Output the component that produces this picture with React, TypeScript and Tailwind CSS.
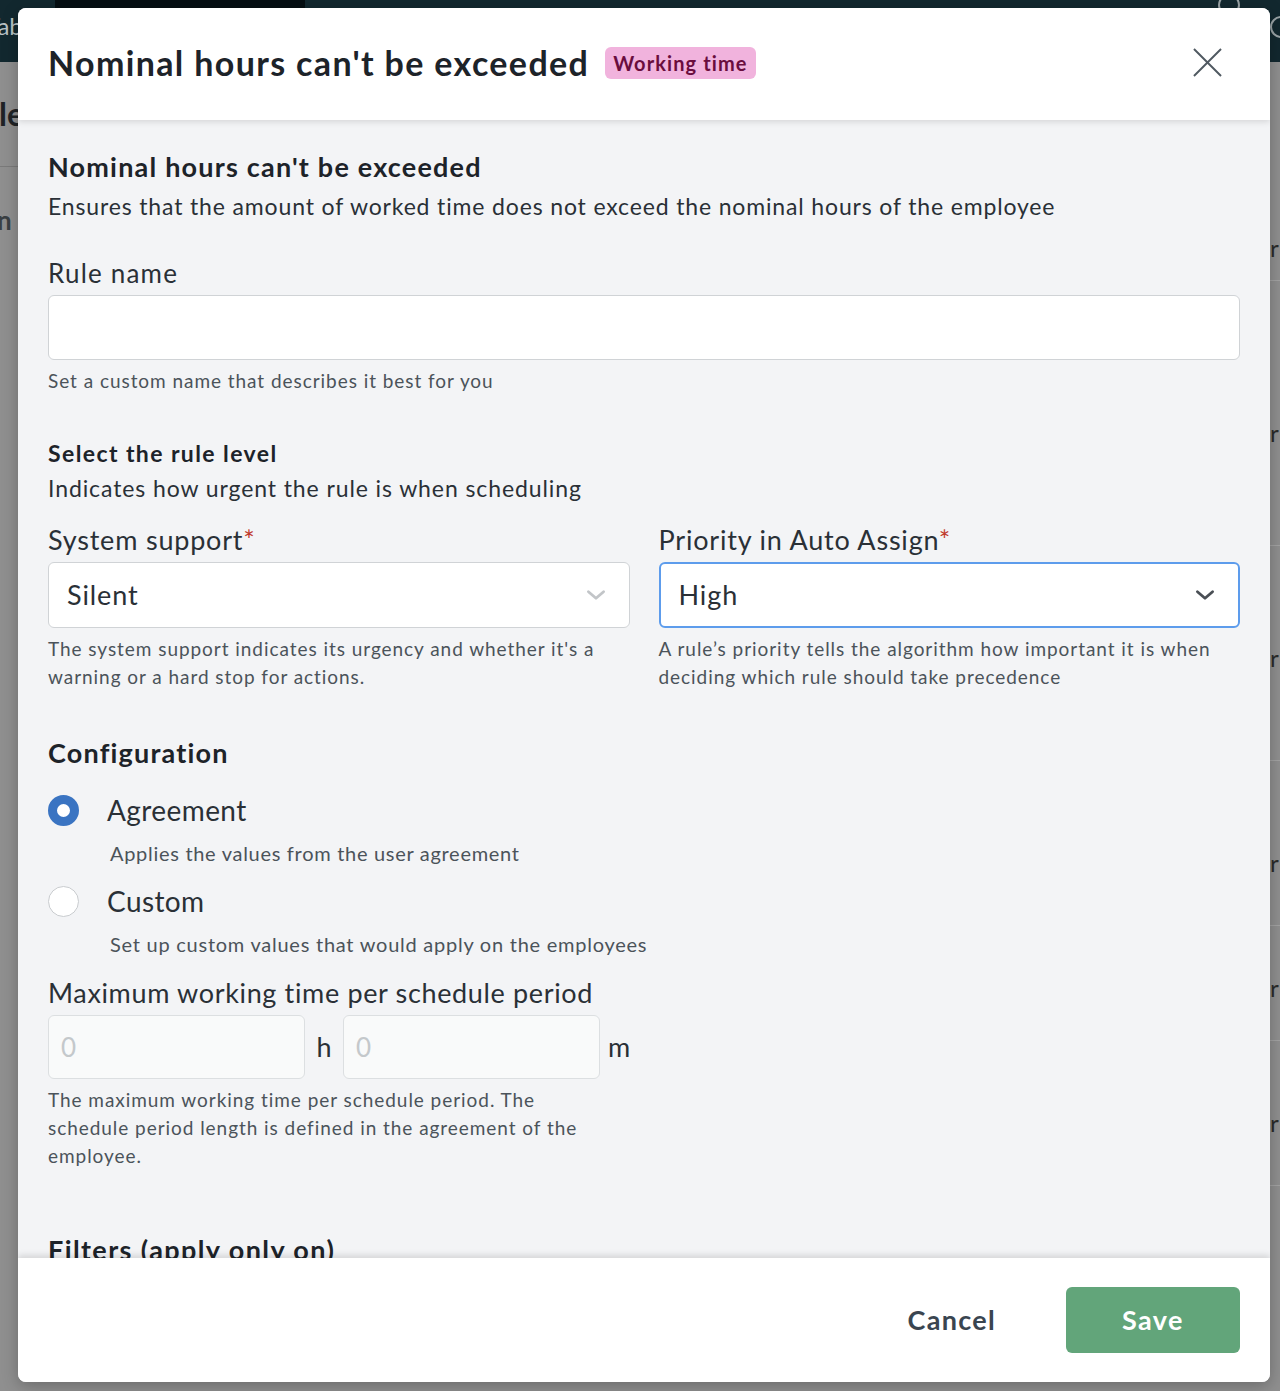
import React, { useState } from 'react';

const font = { fontFamily: 'Lato, "Noto Sans", sans-serif' };

const Chevron = ({ className }: { className?: string }) => (
    <svg viewBox="0 0 24 24" className={className} fill="none" stroke="currentColor" strokeWidth={2.6} strokeLinecap="round" strokeLinejoin="round">
        <path d="M5 9l7 6 7-6" />
    </svg>
);

const Radio = ({ checked }: { checked: boolean }) =>
    checked ? (
        <span className="block w-[31px] h-[31px] rounded-full border-[9px] border-[#3a74c2] bg-white" />
    ) : (
        <span className="block w-[31px] h-[31px] rounded-full border border-[#c9cccf] bg-white" />
    );

const Select = ({ value, focused }: { value: string; focused?: boolean }) => (
    <div
        className={
            focused
                ? 'flex items-center justify-between h-[66px] pl-[18px] pr-[20px] bg-white rounded-md border-2 border-[#5d9cec]'
                : 'flex items-center justify-between h-[66px] pl-[18px] pr-[20px] bg-white rounded-md border border-[#d0d3d6]'
        }
    >
        <span className="text-[27px] tracking-[0.9px] text-[#2a3036]">{value}</span>
        <Chevron className={focused ? 'w-[26px] h-[26px] text-[#4a4f55]' : 'w-[26px] h-[26px] text-[#c2c5c8]'} />
    </div>
);

const Helper = ({ children, className = '' }: { children: React.ReactNode; className?: string }) => (
    <p className={'text-[19px] leading-[28px] tracking-[0.95px] text-[#4b535a] ' + className}>{children}</p>
);

export default function App() {
    const [config, setConfig] = useState<'agreement' | 'custom'>('agreement');

    return (
        <div className="relative w-[1280px] h-[1391px] overflow-hidden bg-[#8f8f8f] [font-variant-ligatures:none]" style={font}>
            {/* page behind the overlay */}
            <div className="flex h-[62px] bg-[#12282f]">
                <div className="w-[55px] overflow-hidden">
                    <div className="-ml-[14px] pt-[8px] text-[24px] text-[#b9c2c4]">Tab</div>
                </div>
                <div className="w-[250px] bg-[#050e12]" />
                <div className="flex-1" />
                <div className="w-[22px] h-[22px] mt-[-6px] mr-[30px] rounded-full border-2 border-[#9aa3a6]" />
                <div className="w-[22px] h-[22px] mt-[16px] mr-[-12px] rounded-full border-2 border-[#9aa3a6]" />
            </div>
            <div className="flex justify-between">
                <div className="w-[18px] overflow-hidden">
                    <div className="-ml-[1px] pt-[36px] text-[32px] font-bold text-[#1f2326] leading-none">le</div>
                    <div className="mt-[36px] border-t border-[#7a7a7a] w-[18px]" />
                    <div className="-ml-[3px] mt-[40px] text-[26px] font-bold text-[#3a3f43] leading-none">n</div>
                </div>
                <div className="w-[10px] overflow-hidden text-[24px] text-[#2a2a2a] leading-none">
                    <div className="pt-[174px]">r</div>
                    <div className="mt-[20px] border-t border-[#a3a3a3]" />
                    <div className="mt-[140px]">r</div>
                    <div className="mt-[100px] border-t border-[#a3a3a3]" />
                    <div className="mt-[100px]">r</div>
                    <div className="mt-[90px] border-t border-[#a3a3a3]" />
                    <div className="mt-[90px]">r</div>
                    <div className="mt-[50px] border-t border-[#a3a3a3]" />
                    <div className="mt-[50px]">r</div>
                    <div className="mt-[40px] border-t border-[#a3a3a3]" />
                    <div className="mt-[70px]">r</div>
                    <div className="mt-[50px] border-t border-[#a3a3a3]" />
                </div>
            </div>

            {/* modal */}
            <div className="absolute left-[18px] top-[8px] w-[1252px] h-[1374px] flex flex-col rounded-lg overflow-hidden bg-[#f3f4f6] shadow-[0_4px_16px_rgba(0,0,0,0.25)]">
                <div className="relative z-10 flex items-center justify-between h-[112px] shrink-0 bg-white pl-[30px] pr-[48px] pb-[3px] shadow-[0_2px_6px_rgba(0,0,0,0.12)]">
                    <div className="flex items-center gap-[16px]">
                        <h1 className="text-[34px] font-bold text-[#1d2329] tracking-[1.35px]">Nominal hours can't be exceeded</h1>
                        <span className="mt-[1px] px-[8px] py-[1px] rounded-md bg-[#f1b3dd] text-[20px] font-bold tracking-[1.1px] text-[#6a0d3e]">Working time</span>
                    </div>
                    <button className="text-[#505961]">
                        <svg viewBox="0 0 30 30" className="w-[29px] h-[29px]" fill="none" stroke="currentColor" strokeWidth={2}>
                            <path d="M1 1l28 28M29 1L1 29" />
                        </svg>
                    </button>
                </div>

                <div className="flex-1 overflow-hidden px-[30px] pt-[30px] text-[#2a3036]">
                    <h2 className="text-[27px] font-bold text-[#1d2329] leading-[34px] tracking-[1.2px]">Nominal hours can't be exceeded</h2>
                    <p className="mt-[4px] text-[23px] leading-[36px] tracking-[0.85px] text-[#2a3036]">
                        Ensures that the amount of worked time does not exceed the nominal hours of the employee
                    </p>

                    <label className="block mt-[32px] text-[26px] leading-[34px] tracking-[1.2px]">Rule name</label>
                    <input className="block mt-[5px] w-full h-[65px] bg-white rounded-md border border-[#d0d3d6] outline-none" />
                    <Helper className="mt-[7px]">Set a custom name that describes it best for you</Helper>

                    <h3 className="mt-[42px] text-[23px] font-bold text-[#1d2329] leading-[32px] tracking-[1.4px]">Select the rule level</h3>
                    <p className="mt-[3px] text-[23px] leading-[32px] tracking-[0.9px]">Indicates how urgent the rule is when scheduling</p>

                    <div className="grid grid-cols-2 gap-[29px] mt-[18px]">
                        <div>
                            <label className="block text-[27px] leading-[36px] tracking-[0.8px]">
                                System support<span className="text-[#c0392b]">*</span>
                            </label>
                            <div className="mt-[4px]">
                                <Select value="Silent" />
                            </div>
                            <Helper className="mt-[7px]">
                                The system support indicates its urgency and whether it's a warning or a hard stop for actions.
                            </Helper>
                        </div>
                        <div>
                            <label className="block text-[27px] leading-[36px] tracking-[0.8px]">
                                Priority in Auto Assign<span className="text-[#c0392b]">*</span>
                            </label>
                            <div className="mt-[4px]">
                                <Select value="High" focused />
                            </div>
                            <Helper className="mt-[7px]">
                                A rule’s priority tells the algorithm how important it is when deciding which rule should take precedence
                            </Helper>
                        </div>
                    </div>

                    <h3 className="mt-[44px] text-[27px] font-bold text-[#1d2329] leading-[36px] tracking-[1.2px]">Configuration</h3>

                    <div className="mt-[21px] flex flex-col">
                        <button className="flex items-center gap-[28px] text-left" onClick={() => setConfig('agreement')}>
                            <Radio checked={config === 'agreement'} />
                            <span className="text-[28px] leading-[36px] tracking-[0.4px]">Agreement</span>
                        </button>
                        <p className="ml-[62px] mt-[11px] text-[20px] leading-[28px] tracking-[0.7px] text-[#4b535a]">Applies the values from the user agreement</p>
                        <button className="mt-[16px] flex items-center gap-[28px] text-left" onClick={() => setConfig('custom')}>
                            <Radio checked={config === 'custom'} />
                            <span className="text-[28px] leading-[36px] tracking-[0.4px]">Custom</span>
                        </button>
                        <p className="ml-[62px] mt-[11px] text-[20px] leading-[28px] tracking-[0.75px] text-[#4b535a]">Set up custom values that would apply on the employees</p>
                    </div>

                    <label className="block mt-[17px] text-[27px] leading-[36px] tracking-[0.65px]">Maximum working time per schedule period</label>
                    <div className="mt-[4px] flex items-center">
                        <input
                            disabled
                            placeholder="0"
                            className="w-[257px] h-[64px] px-[12px] bg-[#f9fafa] rounded-md border border-[#dcdfe1] text-[26px] placeholder:text-[#c4c8cb] outline-none"
                        />
                        <span className="w-[38px] text-center text-[27px]">h</span>
                        <input
                            disabled
                            placeholder="0"
                            className="w-[257px] h-[64px] px-[12px] bg-[#f9fafa] rounded-md border border-[#dcdfe1] text-[26px] placeholder:text-[#c4c8cb] outline-none"
                        />
                        <span className="w-[38px] text-center text-[27px]">m</span>
                    </div>
                    <Helper className="mt-[7px] w-[560px]">
                        The maximum working time per schedule period. The schedule period length is defined in the agreement of the employee.
                    </Helper>

                    <h3 className="mt-[62px] text-[27px] font-bold text-[#1d2329] leading-[36px] tracking-[1.4px]">Filters (apply only on)</h3>
                </div>

                <div className="relative z-10 flex items-center justify-end gap-[70px] h-[124px] shrink-0 bg-white pr-[30px] shadow-[0_-3px_6px_rgba(0,0,0,0.12)]">
                    <button className="text-[27px] font-bold tracking-[1.3px] text-[#3a4550]">Cancel</button>
                    <button className="w-[174px] h-[66px] rounded-md bg-[#62a57a] text-[27px] font-bold tracking-[1.4px] text-white">Save</button>
                </div>
            </div>
        </div>
    );
}
